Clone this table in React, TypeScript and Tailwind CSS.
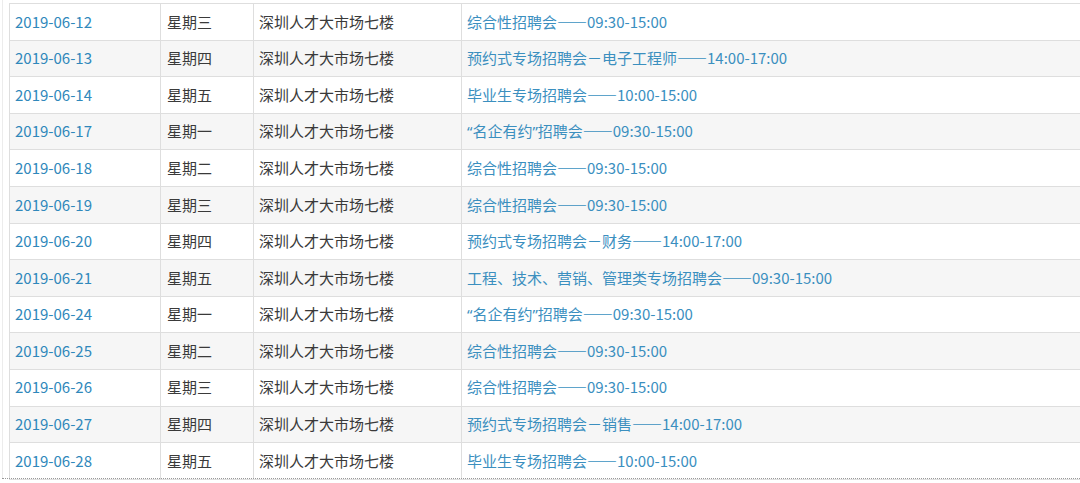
const rows = [
  ["2019-06-12", "星期三", "综合性招聘会——09:30-15:00"],
  ["2019-06-13", "星期四", "预约式专场招聘会－电子工程师——14:00-17:00"],
  ["2019-06-14", "星期五", "毕业生专场招聘会——10:00-15:00"],
  ["2019-06-17", "星期一", "“名企有约”招聘会——09:30-15:00"],
  ["2019-06-18", "星期二", "综合性招聘会——09:30-15:00"],
  ["2019-06-19", "星期三", "综合性招聘会——09:30-15:00"],
  ["2019-06-20", "星期四", "预约式专场招聘会－财务——14:00-17:00"],
  ["2019-06-21", "星期五", "工程、技术、营销、管理类专场招聘会——09:30-15:00"],
  ["2019-06-24", "星期一", "“名企有约”招聘会——09:30-15:00"],
  ["2019-06-25", "星期二", "综合性招聘会——09:30-15:00"],
  ["2019-06-26", "星期三", "综合性招聘会——09:30-15:00"],
  ["2019-06-27", "星期四", "预约式专场招聘会－销售——14:00-17:00"],
  ["2019-06-28", "星期五", "毕业生专场招聘会——10:00-15:00"],
];

// narrow western quotes, as in the source page
function Title({ text }: { text: string }) {
  const parts = text.split(/([“”])/);
  return (
    <>
      {parts.map((p, i) =>
        p === "“" || p === "”" ? (
          <span key={i} className="font-['Noto_Sans',sans-serif]">
            {p}
          </span>
        ) : (
          <span key={i}>{p}</span>
        )
      )}
    </>
  );
}

export default function App() {
  return (
    <div
      lang="zh-CN"
      className="w-[1080px] h-[483px] overflow-hidden bg-white text-[15px] font-['Noto_Sans_CJK_SC',sans-serif]"
    >
      <div className="ml-[2px] border-l border-[#ececec] pl-[6px] pt-[3px] h-[478px]">
        <table className="w-[1100px] border-collapse table-fixed">
          <colgroup>
            <col className="w-[151px]" />
            <col className="w-[93px]" />
            <col className="w-[208px]" />
            <col />
          </colgroup>
          <tbody>
            {rows.map((r, i) => (
              <tr
                key={r[0]}
                className={`h-[36.6px] ${i % 2 === 0 ? "bg-white" : "bg-[#f6f6f6]"}`}
              >
                <td className="border border-[#dedede] pl-[5px] text-[#3088bb] whitespace-nowrap">
                  {r[0]}
                </td>
                <td className="border border-[#dedede] pl-[6px] text-[#3a3a3a] whitespace-nowrap">
                  {r[1]}
                </td>
                <td className="border border-[#dedede] pl-[5px] text-[#3a3a3a] whitespace-nowrap">
                  深圳人才大市场七楼
                </td>
                <td className="border border-[#dedede] pl-[5px] text-[#3b8fbf] whitespace-nowrap">
                  <Title text={r[2]} />
                </td>
              </tr>
            ))}
          </tbody>
        </table>
      </div>
      <div className="border-t border-dotted border-[#999] ml-[2px]" />
    </div>
  );
}
